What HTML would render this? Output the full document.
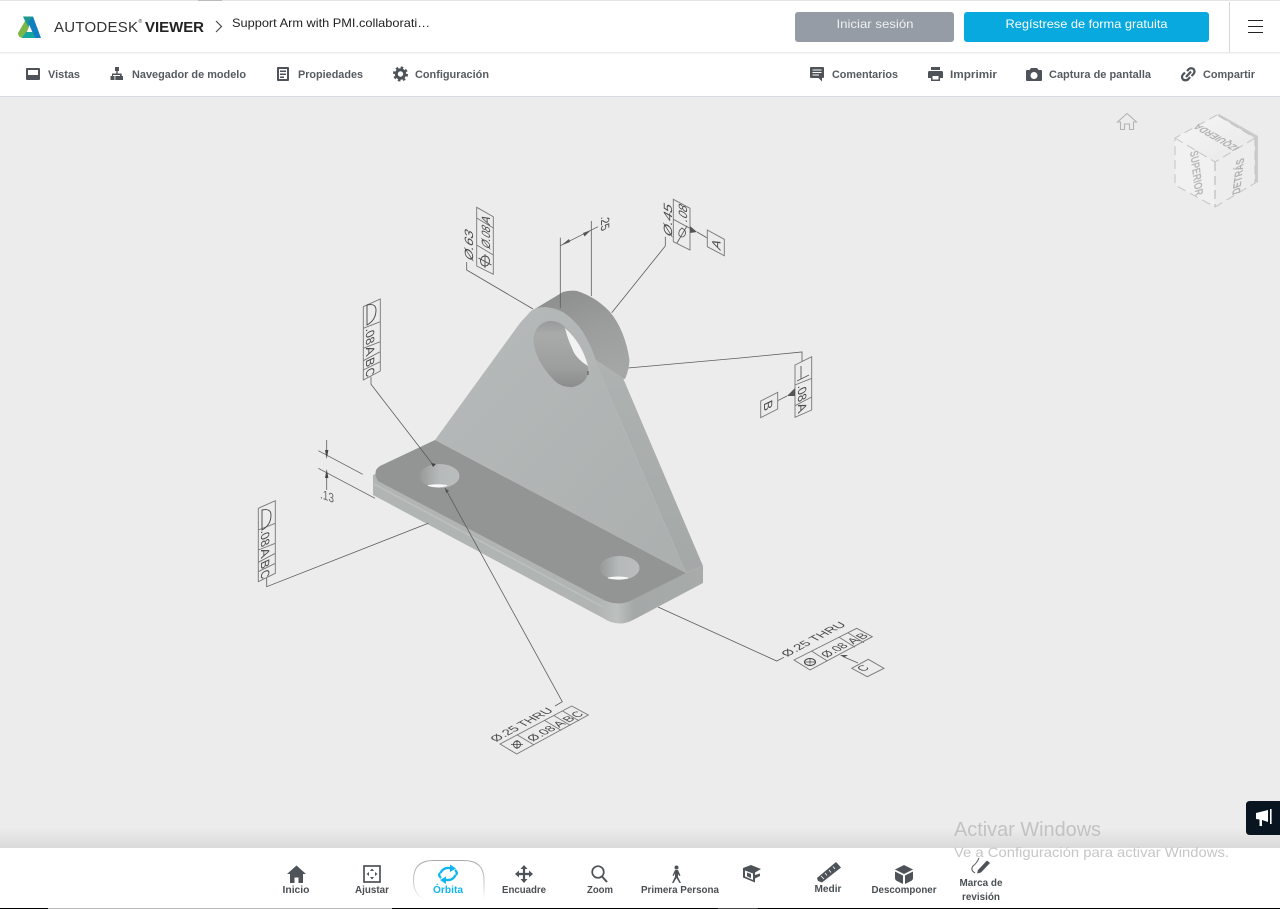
<!DOCTYPE html>
<html lang="es">
<head>
<meta charset="utf-8">
<title>Autodesk Viewer</title>
<style>
html,body{margin:0;padding:0;background:#ececec;width:1280px;height:909px;overflow:hidden}
svg{display:block;position:absolute;left:0;top:0}
text{font-family:"Liberation Sans",sans-serif}
.tb{font-size:11px;font-weight:700;fill:#555b60}
.bt{font-size:10.5px;font-weight:700;fill:#4a4f54}
.l{fill:none;stroke:#5c5c5c;stroke-width:.8}
.f{fill:none;stroke:#777;stroke-width:.9}
.a{font-size:12px;fill:#4a4a4a}
.ic{fill:#4d5358}
</style>
</head>
<body>
<svg width="1280" height="909" viewBox="0 0 1280 909" xmlns="http://www.w3.org/2000/svg">
<defs>
<linearGradient id="shT" x1="0" y1="0" x2="0" y2="1"><stop offset="0" stop-color="#ececec"/><stop offset="1" stop-color="#dadada"/></linearGradient>
<linearGradient id="face" x1="0" y1="0" x2="1" y2="1"><stop offset="0" stop-color="#b6baba"/><stop offset="1" stop-color="#abafae"/></linearGradient>
<linearGradient id="band" x1="0" y1="0" x2="0" y2="1"><stop offset="0" stop-color="#aeb2b1"/><stop offset="1" stop-color="#a4a8a7"/></linearGradient>
<linearGradient id="boss" x1="0.3" y1="0" x2="0.7" y2="1"><stop offset="0" stop-color="#8d8f8e"/><stop offset=".5" stop-color="#9c9e9e"/><stop offset="1" stop-color="#a5a7a7"/></linearGradient>
<linearGradient id="hole" x1="0" y1="0" x2="0" y2="1"><stop offset="0" stop-color="#979a9a"/><stop offset=".2" stop-color="#a9abab"/><stop offset=".7" stop-color="#9d9f9f"/><stop offset="1" stop-color="#8b8d8d"/></linearGradient>
<linearGradient id="bh" x1="0" y1="0" x2="1" y2="0"><stop offset="0" stop-color="#979998"/><stop offset=".5" stop-color="#b6baba"/><stop offset="1" stop-color="#b9bdbd"/></linearGradient>
<linearGradient id="cf" x1="0" y1="0" x2="1" y2="1"><stop offset="0" stop-color="#f6f6f6"/><stop offset="1" stop-color="#e8e8e8"/></linearGradient>
<linearGradient id="side" gradientUnits="userSpaceOnUse" x1="373" y1="0" x2="703" y2="0"><stop offset="0" stop-color="#b0b4b3"/><stop offset=".68" stop-color="#b0b4b3"/><stop offset=".74" stop-color="#bcc0bf"/><stop offset=".79" stop-color="#a4a8a7"/><stop offset="1" stop-color="#a7abaa"/></linearGradient>
<linearGradient id="fade" x1="0" y1="0" x2="0" y2="1"><stop offset="0" stop-color="#aaa"/><stop offset=".6" stop-color="#ccc"/><stop offset="1" stop-color="#fff"/></linearGradient>
</defs>

<!-- canvas -->
<rect width="1280" height="909" fill="#ececec"/>
<rect y="828" width="1280" height="20" fill="url(#shT)"/>

<!-- header -->
<rect y="0" width="1280" height="1" fill="#e4e4e4"/>
<rect x="198" y="0" width="24" height="1" fill="#bcbcbc"/>
<rect y="1" width="1280" height="51" fill="#fff"/>
<rect y="52" width="1280" height="1" fill="#ebebeb"/>
<rect y="53" width="1280" height="1" fill="#f4f4f4"/>
<rect y="54" width="1280" height="42" fill="#fff"/>
<rect y="96" width="1280" height="1" fill="#d6dbe2"/>

<!-- logo -->
<path d="M18 33 L25 21 L29 27 L24 38 Q18 38 18 33Z" fill="#7ab648"/>
<path d="M23 16.500 L33 16.500 L28.500 27 L25 21Z" fill="#1d9a8e"/>
<path d="M33 16.500 L41 38 L35 38 L28 22Z" fill="#0f7fc0"/>
<path d="M22 38 L26 32 L33 32 L35 38Z" fill="#13a5a0"/>
<text x="54" y="32" font-size="15" fill="#333" textLength="84" lengthAdjust="spacing">AUTODESK</text>
<text x="138.500" y="23" font-size="5" fill="#333">®</text>
<text x="145" y="32" font-size="15" font-weight="700" fill="#222" textLength="59" lengthAdjust="spacing">VIEWER</text>
<path d="M216 21 L221.500 26.500 L216 32" fill="none" stroke="#444" stroke-width="1.100"/>
<text x="232" y="27" font-size="12" fill="#222" textLength="198" lengthAdjust="spacingAndGlyphs">Support Arm with PMI.collaborati…</text>

<!-- buttons -->
<rect x="795" y="12" width="159" height="30" rx="3" fill="#959ca5"/>
<text x="875" y="28" font-size="12" fill="#eef0f2" text-anchor="middle" textLength="77" lengthAdjust="spacingAndGlyphs">Iniciar sesión</text>
<rect x="964" y="12" width="245" height="30" rx="3" fill="#08a9df"/>
<text x="1086.500" y="28" font-size="12" fill="#fff" text-anchor="middle" textLength="162" lengthAdjust="spacingAndGlyphs">Regístrese de forma gratuita</text>
<rect x="1229" y="2" width="1" height="50" fill="#d8d8d8"/>
<path d="M1248 20.500H1263M1248 26.500H1263M1248 32.500H1263" stroke="#222" stroke-width="1.100"/>

<!-- toolbar icons -->
<path class="ic" fill-rule="evenodd" d="M27 68H39Q40 68 40 69V79Q40 80 39 80H27Q26 80 26 79V69Q26 68 27 68ZM28 70V75H38V70Z"/>
<path class="ic" d="M115 67h4v4h-1.300v2.500h4V76h1.300v4h-4.500v-4h1.500v-1h-7v1h1.500v4H110.500v-4H112v-2.500h4.300V71H115z"/>
<path class="ic" d="M115.300 76h3.500v4h-3.500z"/>
<path class="ic" fill-rule="evenodd" d="M278 67H288Q289 67 289 68V80Q289 81 288 81H278Q277 81 277 80V68Q277 67 278 67ZM279 69V79H287V69ZM280 70.500H286V72H280ZM280 73.500H286V75H280ZM280 76.500H284V78H280Z"/>
<circle cx="400.500" cy="74" r="4.200" fill="none" stroke="#4d5358" stroke-width="3"/>
<circle cx="400.500" cy="74" r="6.500" fill="none" stroke="#4d5358" stroke-width="2" stroke-dasharray="2.600 2.500"/>
<path class="ic" d="M811 67H823Q824 67 824 68V77Q824 78 823 78H822V81.500L818.500 78H811Q810 78 810 77V68Q810 67 811 67Z"/>
<path d="M812.500 70H821.500M812.500 72.500H821.500M812.500 75H819" stroke="#fff" stroke-width="1"/>
<path class="ic" fill-rule="evenodd" d="M931 67H940V70H931ZM929.500 71H941.500Q943 71 943 72.500V78H940V81H931V78H928V72.500Q928 71 929.500 71ZM932.500 76V79.500H938.500V76Z"/>
<path class="ic" fill-rule="evenodd" d="M1031 68H1037L1038.500 70H1041Q1042 70 1042 71V80Q1042 81 1041 81H1027Q1026 81 1026 80V71Q1026 70 1027 70H1029.500ZM1034 72a3.500 3.500 0 1 0 .01 0Z"/>
<g fill="none" stroke="#4d5358" stroke-width="2.200"><path d="M1187 71 L1189 69 Q1191 67.500 1193.500 69 Q1195.500 71.500 1193.500 74 L1191.500 76"/><path d="M1190 77 L1188 79.500 Q1185.500 81 1183 79.500 Q1181 77 1183 74.500 L1185 72.500"/><path d="M1186 77 L1191 71.500"/></g>

<!-- toolbar labels -->
<text class="tb" x="48" y="78" textLength="32" lengthAdjust="spacingAndGlyphs">Vistas</text>
<text class="tb" x="132" y="78" textLength="114" lengthAdjust="spacingAndGlyphs">Navegador de modelo</text>
<text class="tb" x="298" y="78" textLength="65" lengthAdjust="spacingAndGlyphs">Propiedades</text>
<text class="tb" x="415" y="78" textLength="74" lengthAdjust="spacingAndGlyphs">Configuración</text>
<text class="tb" x="832" y="78" textLength="66" lengthAdjust="spacingAndGlyphs">Comentarios</text>
<text class="tb" x="950" y="78" textLength="47" lengthAdjust="spacingAndGlyphs">Imprimir</text>
<text class="tb" x="1049" y="78" textLength="102" lengthAdjust="spacingAndGlyphs">Captura de pantalla</text>
<text class="tb" x="1203" y="78" textLength="52" lengthAdjust="spacingAndGlyphs">Compartir</text>

<!-- home -->
<path d="M1117.500 122 L1127 113.500 L1136.500 122 L1133.500 122 V129.500 H1129.500 V124 H1124.500 V129.500 H1120.500 V122Z" fill="none" stroke="#b4b4b4" stroke-width="1.100"/>

<!-- nav cube -->
<path d="M1219 114 L1258 136 V182 L1254 184 V140 L1215 117Z" fill="#cbcbcb"/>
<path d="M1217 115 L1255 138 L1215 162 L1175 138Z" fill="url(#cf)"/>
<path d="M1175 138 L1215 162 V207 L1175 185Z" fill="#f1f1f1"/>
<path d="M1215 162 L1255 138 V183 L1215 207Z" fill="#ededed"/>
<g fill="none" stroke="#c4c4c4" stroke-width="1" stroke-dasharray="9 5">
<path d="M1217 115 L1175 138 V185 L1215 207 L1255 183 V138 Z"/>
<path d="M1175 138 L1215 162 L1255 138"/>
<path d="M1215 162 V207" stroke-width="1.400"/>
</g>
<text transform="matrix(.12 .99 -.95 .3 1190 152)" font-size="12" font-weight="700" fill="#b8b8b8" textLength="45" lengthAdjust="spacingAndGlyphs">SUPERIOR</text>
<text transform="matrix(.12 -.99 .95 -.3 1240 193)" font-size="12" font-weight="700" fill="#b0b0b0" textLength="36" lengthAdjust="spacingAndGlyphs">DETRÁS</text>
<text transform="matrix(-.86 -.5 .86 -.5 1240 147.500)" font-size="11" font-weight="700" fill="#b0b0b0" textLength="48" lengthAdjust="spacingAndGlyphs">IZQUIERDA</text>

<!-- leaders behind part -->
<path class="l" d="M466.700 262V270L533 309"/>
<path class="l" d="M665.300 236.700V246L611.700 312.700"/>
<path class="l" d="M591.300 221V296"/>
<path class="l" d="M628 368L740 358L802 352V362"/>
<path class="l" d="M658 607L776.700 661L784 657.300"/>

<!-- part -->
<path d="M533 310 L563 292 Q570 290 577 291 Q596 297 610 312 Q625 330 629.500 360 Q629 370 625 379 L600 375 L590 350Z" fill="url(#boss)"/>
<path class="l" d="M560.300 237.700V308"/>
<path d="M595 359 L623 378 L703 566 L686 573 L617 413Z" fill="url(#band)"/>
<path d="M373 475 V495 L603 618 Q618 628 633 620 L703 583 V566 L686 573 L435 450Z" fill="url(#side)"/>
<path d="M374 484 L603 607" fill="none" stroke="#bcc0bf" stroke-width="1.500"/>
<path d="M435 440 L520 323 L530 312 Q535 307 545 307 Q555 308 563 312 Q575 320 583 332 Q591 345 595 358 L617 413 L686 573Z" fill="url(#face)"/>
<path d="M435 440 L380 466 Q372 471 378 481 L600 598 Q617 608 632 600 L686 573Z" fill="#939594"/>

<!-- plate hole -->
<path d="M533.500 340 Q534 325 548 321 Q558 320 565 327 Q582 343 588 368 Q589 383 573 387 Q560 388 552 378 Q535 360 533.500 340Z" fill="url(#hole)"/>
<path d="M565 328 Q582 343 588 366 Q575 358 572 348 Q568 340 565 328Z" fill="#f2f2f2"/>
<path d="M588 371 V375" stroke="#555" stroke-width="1"/>

<!-- base holes -->
<ellipse cx="439.500" cy="476" rx="20" ry="12" fill="url(#bh)"/>
<path d="M428 485.500 Q438 488 447 485.500 Q438 484 428 485.500Z" fill="#f8f8f8" stroke="#f8f8f8" stroke-width="1"/>
<ellipse cx="619.500" cy="568" rx="20" ry="12" fill="url(#bh)"/>
<path d="M608 578 Q618 580 628 578 Q618 576 608 578Z" fill="#f8f8f8" stroke="#f8f8f8" stroke-width="1"/>

<!-- annotation lines over part -->
<path class="l" d="M371 376.700V384.300L433.300 465"/>
<path d="M431 463 L436 464 L433 467Z" fill="#444"/>
<path class="l" d="M445 488L562.300 701.700L555 706"/>
<path d="M445 488 L449 491 L446 493Z" fill="#555"/>
<path class="l" d="M266.700 578V586.700L428.300 523.300"/>
<path class="l" d="M318.300 450.700L362.700 474.300M318.300 468.300L375 498.300"/>
<path class="l" d="M326.700 440V455M326.700 472.700V490"/>
<path d="M326.700 459 L325 450 L328.400 450Z M326.700 469 L325 478 L328.400 478Z" fill="#444"/>
<text transform="matrix(1 .35 0 1 320 498)" font-size="13" fill="#666" textLength="14" lengthAdjust="spacingAndGlyphs">.13</text>

<!-- dim .25 -->
<path class="l" d="M560.300 245.700L598 226.700"/>
<path d="M561 245.500 L569 239 L570 242Z M591 230 L583 233 L584.500 236.500Z" fill="#555"/>
<text class="a" transform="matrix(0 1 -1 .45 601 217)" font-size="11.500" textLength="15" lengthAdjust="spacingAndGlyphs">.25</text>

<!-- Ø.63 frame -->
<path class="f" d="M476.700 207.300L493.300 216.700V274.300L476.700 266ZM476.700 218L493.300 228M476.700 245L493.300 255"/>
<text class="a" transform="matrix(0 -1 1 .56 473 262)" font-size="13" textLength="30" lengthAdjust="spacingAndGlyphs">Ø.63</text>
<ellipse cx="485" cy="261" rx="4.500" ry="5" fill="none" stroke="#444" stroke-width=".9"/>
<path d="M478.500 258 L491.500 265 M485 254 V268" stroke="#444" stroke-width=".8"/>
<text class="a" transform="matrix(0 -1 1 .56 490 250)" font-size="12" textLength="22" lengthAdjust="spacingAndGlyphs">Ø.08</text>
<text class="a" transform="matrix(0 -1 1 .56 490 226)" font-size="11" textLength="8" lengthAdjust="spacingAndGlyphs">A</text>

<!-- Ø.45 frame -->
<path class="f" d="M673.300 199.300L690 208.300V250L673.300 241.700ZM673.300 219.300L690 228.300"/>
<text class="a" transform="matrix(0 -1 1 .56 672 238)" font-size="13" textLength="32" lengthAdjust="spacingAndGlyphs">Ø.45</text>
<text class="a" transform="matrix(0 -1 1 .56 687 223)" font-size="12" textLength="16" lengthAdjust="spacingAndGlyphs">.08</text>
<path d="M677 243 L687 226 M682 228 Q678 231 679 235 Q682 239 685 235 Q687 231 682 228Z" fill="none" stroke="#555" stroke-width=".8"/>
<path d="M690 226 L697 232 L690 233Z" fill="#555"/>
<path class="l" d="M697 232L707.300 238"/>
<path class="f" d="M707.300 230L724.300 239.300V255.700L707.300 246.700Z"/>
<text class="a" transform="matrix(0 -1 1 .56 720.500 251)" font-size="11" textLength="9" lengthAdjust="spacingAndGlyphs">A</text>

<!-- right frame -->
<path class="f" d="M795 365L811.700 356.700V410L795 417.300ZM795 385L811.700 378.300M795 405.700L811.700 397"/>
<path d="M797 381L809 375M801 366V379" fill="none" stroke="#555" stroke-width=".9"/>
<text class="a" transform="matrix(0 1 -1 .48 798 386)" font-size="13" textLength="17" lengthAdjust="spacingAndGlyphs">.08</text>
<text class="a" transform="matrix(0 1 -1 .48 798 405)" font-size="12" textLength="9" lengthAdjust="spacingAndGlyphs">A</text>
<path d="M795 388V396H787Z" fill="#555"/>
<path class="l" d="M777.700 400.700L787 396"/>
<path class="f" d="M760.700 401L777.700 392.300V409L760.700 417.700Z"/>
<text class="a" transform="matrix(0 1 -1 .48 764 403)" font-size="11" textLength="9" lengthAdjust="spacingAndGlyphs">B</text>

<!-- D frame upper -->
<path class="f" d="M363.300 306.700L380.300 299V371L363.300 380ZM363.300 328.300L380.300 321.700M363.300 348.300L380.300 341.700M363.300 360.700L380.300 351.700M363.300 370L380.300 361.700"/>
<path d="M367 305 V325 Q376 320 376 310 Q376 303 367 305Z" fill="none" stroke="#444" stroke-width=".9"/>
<text class="a" transform="matrix(0 1 -1 .45 366 329)" font-size="13" textLength="17" lengthAdjust="spacingAndGlyphs">.08</text>
<text class="a" transform="matrix(0 1 -1 .45 366 348)" font-size="12" textLength="9" lengthAdjust="spacingAndGlyphs">A</text>
<text class="a" transform="matrix(0 1 -1 .45 366 360)" font-size="12" textLength="8" lengthAdjust="spacingAndGlyphs">B</text>
<text class="a" transform="matrix(0 1 -1 .45 366 370)" font-size="12" textLength="8" lengthAdjust="spacingAndGlyphs">C</text>

<!-- D frame lower -->
<path class="f" d="M258.300 508.300L275.300 500.700V573.300L258.300 581.700ZM258.300 530L275.300 523.300M258.300 550L275.300 543.300M258.300 562.300L275.300 553.300M258.300 571.700L275.300 563.300"/>
<path d="M262 510 V530 Q271 525 271 515 Q271 508 262 510Z" fill="none" stroke="#444" stroke-width=".9"/>
<text class="a" transform="matrix(0 1 -1 .45 261 531)" font-size="13" textLength="17" lengthAdjust="spacingAndGlyphs">.08</text>
<text class="a" transform="matrix(0 1 -1 .45 261 550)" font-size="12" textLength="9" lengthAdjust="spacingAndGlyphs">A</text>
<text class="a" transform="matrix(0 1 -1 .45 261 562)" font-size="12" textLength="8" lengthAdjust="spacingAndGlyphs">B</text>
<text class="a" transform="matrix(0 1 -1 .45 261 572)" font-size="12" textLength="8" lengthAdjust="spacingAndGlyphs">C</text>

<!-- bottom-left frame -->
<path class="f" d="M500 744L571.700 706L588.300 715L516.700 754ZM517.200 734.900L533.900 744.900M544.500 720.400L561.200 730.400M553.800 715.500L570.500 725.500M562.400 710.900L579.100 720.900"/>
<text class="a" transform="matrix(.88 -.47 .88 .47 496 742)" font-size="13" textLength="66" lengthAdjust="spacingAndGlyphs">Ø.25 THRU</text>
<circle cx="517" cy="744.500" r="3.500" fill="none" stroke="#444" stroke-width=".9"/>
<path d="M511 744.500H523M517 740V749" stroke="#444" stroke-width=".8"/>
<text class="a" transform="matrix(.88 -.47 .88 .47 532.800 741.700)" font-size="12" textLength="27" lengthAdjust="spacingAndGlyphs">Ø.08</text>
<text class="a" transform="matrix(.88 -.47 .88 .47 559.200 727.700)" font-size="11" textLength="8" lengthAdjust="spacingAndGlyphs">A</text>
<text class="a" transform="matrix(.88 -.47 .88 .47 568.600 722.700)" font-size="11" textLength="8" lengthAdjust="spacingAndGlyphs">B</text>
<text class="a" transform="matrix(.88 -.47 .88 .47 577.200 718.200)" font-size="11" textLength="8" lengthAdjust="spacingAndGlyphs">C</text>

<!-- bottom-right frame -->
<path class="f" d="M794 660L856.700 628.300L872.300 636.700L810 670ZM811.600 651.100L827.600 661.100M839.100 637.200L855.100 647.200M847.900 632.700L863.900 642.700"/>
<text class="a" transform="matrix(.88 -.47 .88 .47 787 657)" font-size="13" textLength="68" lengthAdjust="spacingAndGlyphs">Ø.25 THRU</text>
<ellipse cx="810" cy="662" rx="5.500" ry="3.500" fill="none" stroke="#444" stroke-width="1"/>
<path d="M805 662H815M810 658.500V665.500" stroke="#444" stroke-width=".7"/>
<text class="a" transform="matrix(.88 -.47 .88 .47 826.800 657.900)" font-size="12" textLength="25" lengthAdjust="spacingAndGlyphs">Ø.08</text>
<text class="a" transform="matrix(.88 -.47 .88 .47 853.200 644.500)" font-size="11" textLength="8" lengthAdjust="spacingAndGlyphs">A</text>
<text class="a" transform="matrix(.88 -.47 .88 .47 862 640)" font-size="11" textLength="8" lengthAdjust="spacingAndGlyphs">B</text>
<path d="M840 655H848L844 657.500Z" fill="#555"/>
<path class="l" d="M844 657L858 663"/>
<path class="f" d="M851.700 668.300L868.300 659.300L884 668.300L867.300 676.700Z"/>
<text class="a" transform="matrix(.88 -.47 .88 .47 863 672)" font-size="11" textLength="8" lengthAdjust="spacingAndGlyphs">C</text>

<!-- bottom bar -->
<rect y="848" width="1280" height="60" fill="#fff"/>
<rect y="908" width="1280" height="1" fill="#000"/>
<rect x="48" y="908" width="344" height="1" fill="#b8b8b8"/>
<rect x="718" y="908" width="40" height="1" fill="#444"/>

<!-- Orbit pill -->
<path d="M484 900 V880 Q484 860.500 464 860.500 H433 Q413.500 860.500 413.500 880 Q413.500 897 428 900" fill="none" stroke="url(#fade)" stroke-width="1"/>

<!-- bottom icons -->
<path class="ic" d="M296.500 865.500 L306 874 H303 V883 H298.500 V877.500 H294.500 V883 H290 V874 H287Z"/>
<rect x="364" y="866" width="16" height="16" fill="none" stroke="#4d5358" stroke-width="1.700"/>
<path class="ic" d="M372 868.500l2 2.500h-4zM372 879.500l2-2.500h-4zM366.500 874l2.500-2v4zM377.500 874l-2.500-2v4z"/>
<g fill="none" stroke="#10b4f0" stroke-width="2.300"><path d="M440.500 873 Q443 867.500 449 868 L453 868.500"/><path d="M455.500 875 Q453 880.500 447 880 L443.500 879.500"/><path d="M441 878 Q438 875.500 440 873"/><path d="M455 870 Q458 872.500 456 875"/></g>
<path d="M450 864.500L456 868.500L450 872ZM446 876.500L440 880L446 884Z" fill="#10b4f0"/>
<path d="M524 868V880M518 874H530" stroke="#4d5358" stroke-width="2.200"/>
<path class="ic" d="M524 865l3.500 4h-7zM524 883l3.500-4h-7zM515 874l4-3.500v7zM533 874l-4-3.500v7z"/>
<circle cx="598" cy="872" r="5.800" fill="none" stroke="#4d5358" stroke-width="1.700"/>
<path d="M602 876.500L607 882" stroke="#4d5358" stroke-width="2"/>
<circle cx="676.500" cy="867.500" r="2" class="ic"/>
<path class="ic" d="M675 870H678L680.500 875.500L679.300 876L678 874V877L681 883H679.500L676.500 878L673.500 883H672L675 876.500V873.500L673.500 876L672.500 875.500Z"/>
<path class="ic" fill-rule="evenodd" d="M743 868L751 865L761 869L755 872.500V875L760 873.500V876L755 878.500V882.500L743 877.500ZM745 870.500V876.500L753 880V873.500ZM747 872.500L751 874V878L747 876.200Z"/>
<path class="ic" d="M817 878L836 862L841 867.500L822 882.500L818 881Z"/>
<path d="M821 876L824 879M825 873L827 875.500M829 870L831 872.500M833 866.500L835 869" stroke="#fff" stroke-width=".8"/>
<path class="ic" d="M904 865L913 869.500L904 874L895 869.500ZM895 871.500L903 875.500V884L897 881Q895 880 895 878ZM913 871.500L905 875.500V884L911 881Q913 880 913 878Z"/>
<path class="ic" d="M978 870L987 860.500L990 863L981 872.500L977 873.500Z"/>
<path d="M979 858 Q977 863 973 866 Q970 870 975 873" fill="none" stroke="#4d5358" stroke-width="1"/>

<!-- bottom labels -->
<text class="bt" x="296" y="893" text-anchor="middle" textLength="27" lengthAdjust="spacingAndGlyphs">Inicio</text>
<text class="bt" x="372" y="893" text-anchor="middle" textLength="34" lengthAdjust="spacingAndGlyphs">Ajustar</text>
<text class="bt" x="448" y="893" text-anchor="middle" style="fill:#10b4f0" textLength="30" lengthAdjust="spacingAndGlyphs">Órbita</text>
<text class="bt" x="524" y="893" text-anchor="middle" textLength="44" lengthAdjust="spacingAndGlyphs">Encuadre</text>
<text class="bt" x="600" y="893" text-anchor="middle" textLength="26" lengthAdjust="spacingAndGlyphs">Zoom</text>
<text class="bt" x="680" y="893" text-anchor="middle" textLength="78" lengthAdjust="spacingAndGlyphs">Primera Persona</text>
<text class="bt" x="828" y="892" text-anchor="middle" textLength="27" lengthAdjust="spacingAndGlyphs">Medir</text>
<text class="bt" x="904" y="893" text-anchor="middle" textLength="65" lengthAdjust="spacingAndGlyphs">Descomponer</text>
<text class="bt" x="981" y="886" text-anchor="middle" textLength="43" lengthAdjust="spacingAndGlyphs">Marca de</text>
<text class="bt" x="981" y="900" text-anchor="middle" textLength="38" lengthAdjust="spacingAndGlyphs">revisión</text>

<!-- Windows watermark -->
<text x="954" y="836" font-size="20" fill="#c2c2c2" textLength="147" lengthAdjust="spacingAndGlyphs">Activar Windows</text>
<text x="954" y="857" font-size="14" fill="#c6c6c6" textLength="275" lengthAdjust="spacingAndGlyphs">Ve a Configuración para activar Windows.</text>

<!-- feedback -->
<path d="M1250 801H1280V835H1250Q1246 835 1246 831V805Q1246 801 1250 801Z" fill="#08141f"/>
<path d="M1256 813L1268 810V822L1262 820V826H1259.500V819.500L1256 819Z" fill="#fff"/>
<rect x="1270" y="809" width="1.600" height="15" fill="#fff"/>
</svg>
</body>
</html>
